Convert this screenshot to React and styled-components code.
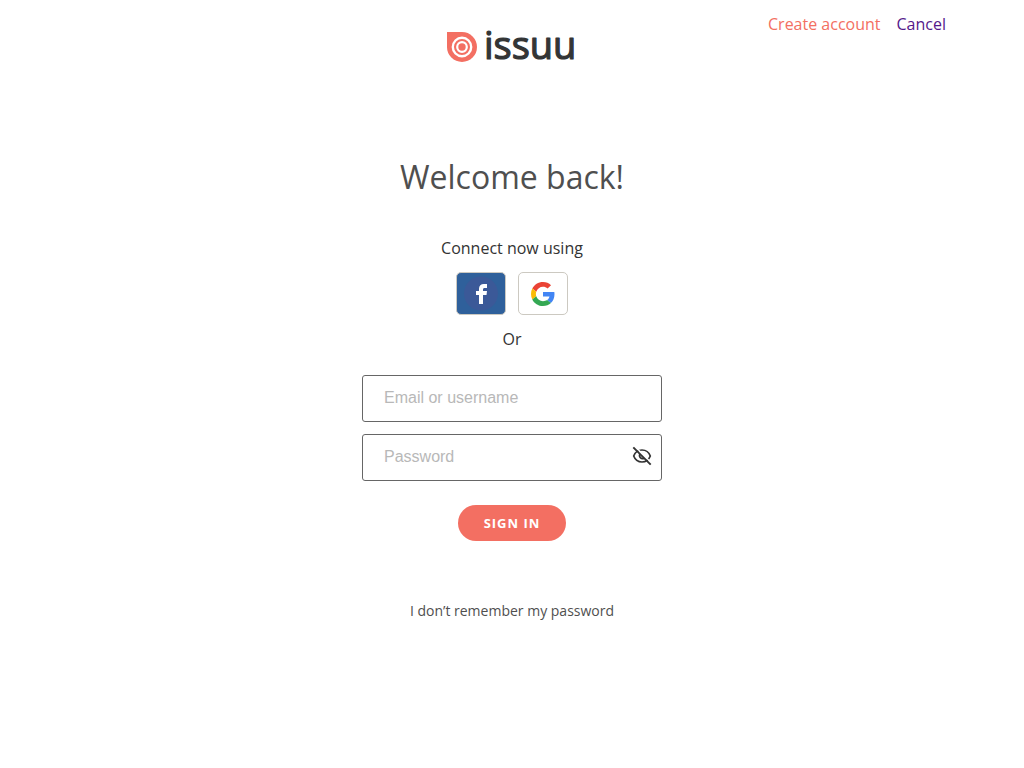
import React, { useState } from "react";
import styled, { createGlobalStyle } from "styled-components";

const GlobalStyle = createGlobalStyle`
  * {
    box-sizing: border-box;
  }

  body {
    margin: 0;
    background: #fff;
    color: #333;
    font-family: "Open Sans", sans-serif;
    font-size: 16px;
    line-height: 24px;
  }
`;

const Header = styled.header`
  display: grid;
  grid-template-columns: 1fr auto 1fr;
  align-items: start;
  padding-top: 12px;
`;

const LogoLink = styled.a`
  grid-column: 2;
  display: block;

  svg {
    display: block;
  }
`;

const Wordmark = styled.text`
  font-family: "Open Sans", sans-serif;
  font-size: 38px;
  font-weight: 400;
  fill: #333536;
  stroke: #333536;
  stroke-width: 1.2;
  stroke-linejoin: round;
`;

const Nav = styled.nav`
  display: flex;
  justify-content: flex-end;
  gap: 16px;
  padding-right: 78px;
`;

const NavLink = styled.a`
  color: ${(props) => props.$color};
  text-decoration: none;
  white-space: nowrap;
`;

const Main = styled.main`
  display: flex;
  flex-direction: column;
  align-items: center;
  padding: 82px 16px 48px;
`;

const Title = styled.h1`
  margin: 0;
  font-size: 32px;
  font-weight: 400;
  line-height: 46px;
  color: #4f4f4f;
`;

const Label = styled.p`
  margin: 0;
`;

const Social = styled.section`
  display: grid;
  justify-items: center;
  gap: 12px;
  margin-top: 36px;
`;

const SocialButtons = styled.div`
  display: flex;
  gap: 12px;
`;

const SocialButton = styled.button`
  display: grid;
  place-items: center;
  width: 50px;
  height: 43px;
  padding: 0;
  border: 1px solid #ccc9c1;
  border-radius: 5px;
  background: ${(props) => props.$background};
  cursor: pointer;
`;

const Form = styled.form`
  display: grid;
  justify-items: center;
  gap: 12px;
  width: 100%;
  max-width: 300px;
  margin-top: 24px;
`;

const Field = styled.div`
  position: relative;
  width: 100%;
`;

const Input = styled.input`
  display: block;
  width: 100%;
  height: 47px;
  padding: 0 48px 2px 21px;
  border: 1px solid #666;
  border-radius: 3px;
  background: #fff;
  color: #333;
  font-family: "Liberation Sans", Arial, sans-serif;
  font-size: 16px;

  &::placeholder {
    color: #b8b8b8;
    opacity: 1;
  }
`;

const ToggleButton = styled.button`
  position: absolute;
  top: 12px;
  right: 10px;
  width: 20px;
  height: 20px;
  padding: 0;
  border: 0;
  background: none;
  cursor: pointer;

  svg {
    display: block;
  }
`;

const SubmitButton = styled.button`
  height: 36px;
  margin-top: 12px;
  padding: 0 26px;
  border: 0;
  border-radius: 18px;
  background: #f36f62;
  color: #fff;
  font-family: inherit;
  font-size: 13px;
  font-weight: 700;
  letter-spacing: 1px;
  text-transform: uppercase;
  cursor: pointer;
`;

const ForgotLink = styled.a`
  margin-top: 58px;
  color: #4f4f4f;
  font-size: 14px;
  text-decoration: none;
`;

const Logo = () => (
  <svg width="130" height="60" viewBox="0 0 130 60" role="img" aria-label="issuu">
    <path d="M0 20h15a15 15 0 1 1-15 15z" fill="#f36f62" />
    <circle cx="15" cy="35" r="9.2" fill="none" stroke="#fff" strokeWidth="2.4" />
    <circle cx="15" cy="35" r="4.8" fill="none" stroke="#fff" strokeWidth="2.2" />
    <Wordmark x="37" y="47">
      issuu
    </Wordmark>
  </svg>
);

const FacebookIcon = () => (
  <svg width="48" height="41" viewBox="0 0 48 41" aria-hidden="true">
    <circle cx="24" cy="20.5" r="17" fill="#3b5998" />
    <path
      d="M22 31v-9h-3v-4h3v-2.200C22 12.700 23.900 11 26.900 11H30v4h-2.200c-1.400 0-1.800.6-1.800 1.700V18h4l-.5 4H26v9z"
      fill="#fff"
    />
  </svg>
);

const GoogleIcon = () => (
  <svg width="24" height="24" viewBox="0 0 48 48" aria-hidden="true">
    <path
      fill="#ea4335"
      d="M24 9.500c3.540 0 6.710 1.220 9.210 3.600l6.850-6.850C35.900 2.380 30.470 0 24 0 14.620 0 6.510 5.380 2.560 13.220l7.980 6.190C12.430 13.720 17.740 9.500 24 9.500z"
    />
    <path
      fill="#4285f4"
      d="M46.980 24.550c0-1.570-.15-3.090-.38-4.550H24v9.020h12.940c-.58 2.960-2.260 5.480-4.780 7.180l7.730 6c4.510-4.180 7.090-10.360 7.090-17.650z"
    />
    <path
      fill="#fbbc05"
      d="M10.530 28.590c-.48-1.450-.76-2.990-.76-4.590s.27-3.140.76-4.590l-7.980-6.190C.92 16.460 0 20.120 0 24c0 3.880.92 7.540 2.560 10.780z"
    />
    <path
      fill="#34a853"
      d="M24 48c6.480 0 11.930-2.130 15.890-5.810l-7.730-6c-2.150 1.450-4.920 2.300-8.160 2.300-6.260 0-11.570-4.220-13.470-9.910l-7.980 6.190C6.510 42.620 14.620 48 24 48z"
    />
  </svg>
);

const EyeIcon = ({ crossed }) => (
  <svg
    width="20"
    height="20"
    viewBox="0 0 20 20"
    fill="none"
    stroke="#333"
    strokeWidth="1.700"
    aria-hidden="true"
  >
    <path d="M1.700 10C3.100 6.300 6.200 4 10 4s6.900 2.300 8.300 6c-1.400 3.700-4.500 6-8.300 6s-6.900-2.300-8.300-6z" />
    {crossed ? (
      <>
        <path d="M8.200 7.800a3 3 0 0 0 3.900 4.400" />
        <path d="M3.300.7l16 16" stroke="#fff" strokeWidth="1.400" />
        <path d="M1.300 1.300l17.400 17.400" strokeWidth="1.900" />
      </>
    ) : (
      <circle cx="10" cy="10" r="2.700" />
    )}
  </svg>
);

function App() {
  const [visible, setVisible] = useState(false);

  return (
    <>
      <GlobalStyle />
      <Header>
        <LogoLink href="#home">
          <Logo />
        </LogoLink>
        <Nav>
          <NavLink href="#signup" $color="#f36f62">
            Create account
          </NavLink>
          <NavLink href="#cancel" $color="#551a8b">
            Cancel
          </NavLink>
        </Nav>
      </Header>
      <Main>
        <Title>Welcome back!</Title>
        <Social>
          <Label>Connect now using</Label>
          <SocialButtons>
            <SocialButton type="button" aria-label="Facebook" $background="#2f609b">
              <FacebookIcon />
            </SocialButton>
            <SocialButton type="button" aria-label="Google" $background="#fff">
              <GoogleIcon />
            </SocialButton>
          </SocialButtons>
          <Label>Or</Label>
        </Social>
        <Form onSubmit={(e) => e.preventDefault()}>
          <Field>
            <Input
              type="text"
              name="username"
              aria-label="Email or username"
              placeholder="Email or username"
            />
          </Field>
          <Field>
            <Input
              type={visible ? "text" : "password"}
              name="password"
              aria-label="Password"
              placeholder="Password"
            />
            <ToggleButton
              type="button"
              aria-label="Toggle password visibility"
              onClick={() => setVisible(!visible)}
            >
              <EyeIcon crossed={!visible} />
            </ToggleButton>
          </Field>
          <SubmitButton type="submit">Sign in</SubmitButton>
        </Form>
        <ForgotLink href="#reset">I don’t remember my password</ForgotLink>
      </Main>
    </>
  );
}

export default App;
